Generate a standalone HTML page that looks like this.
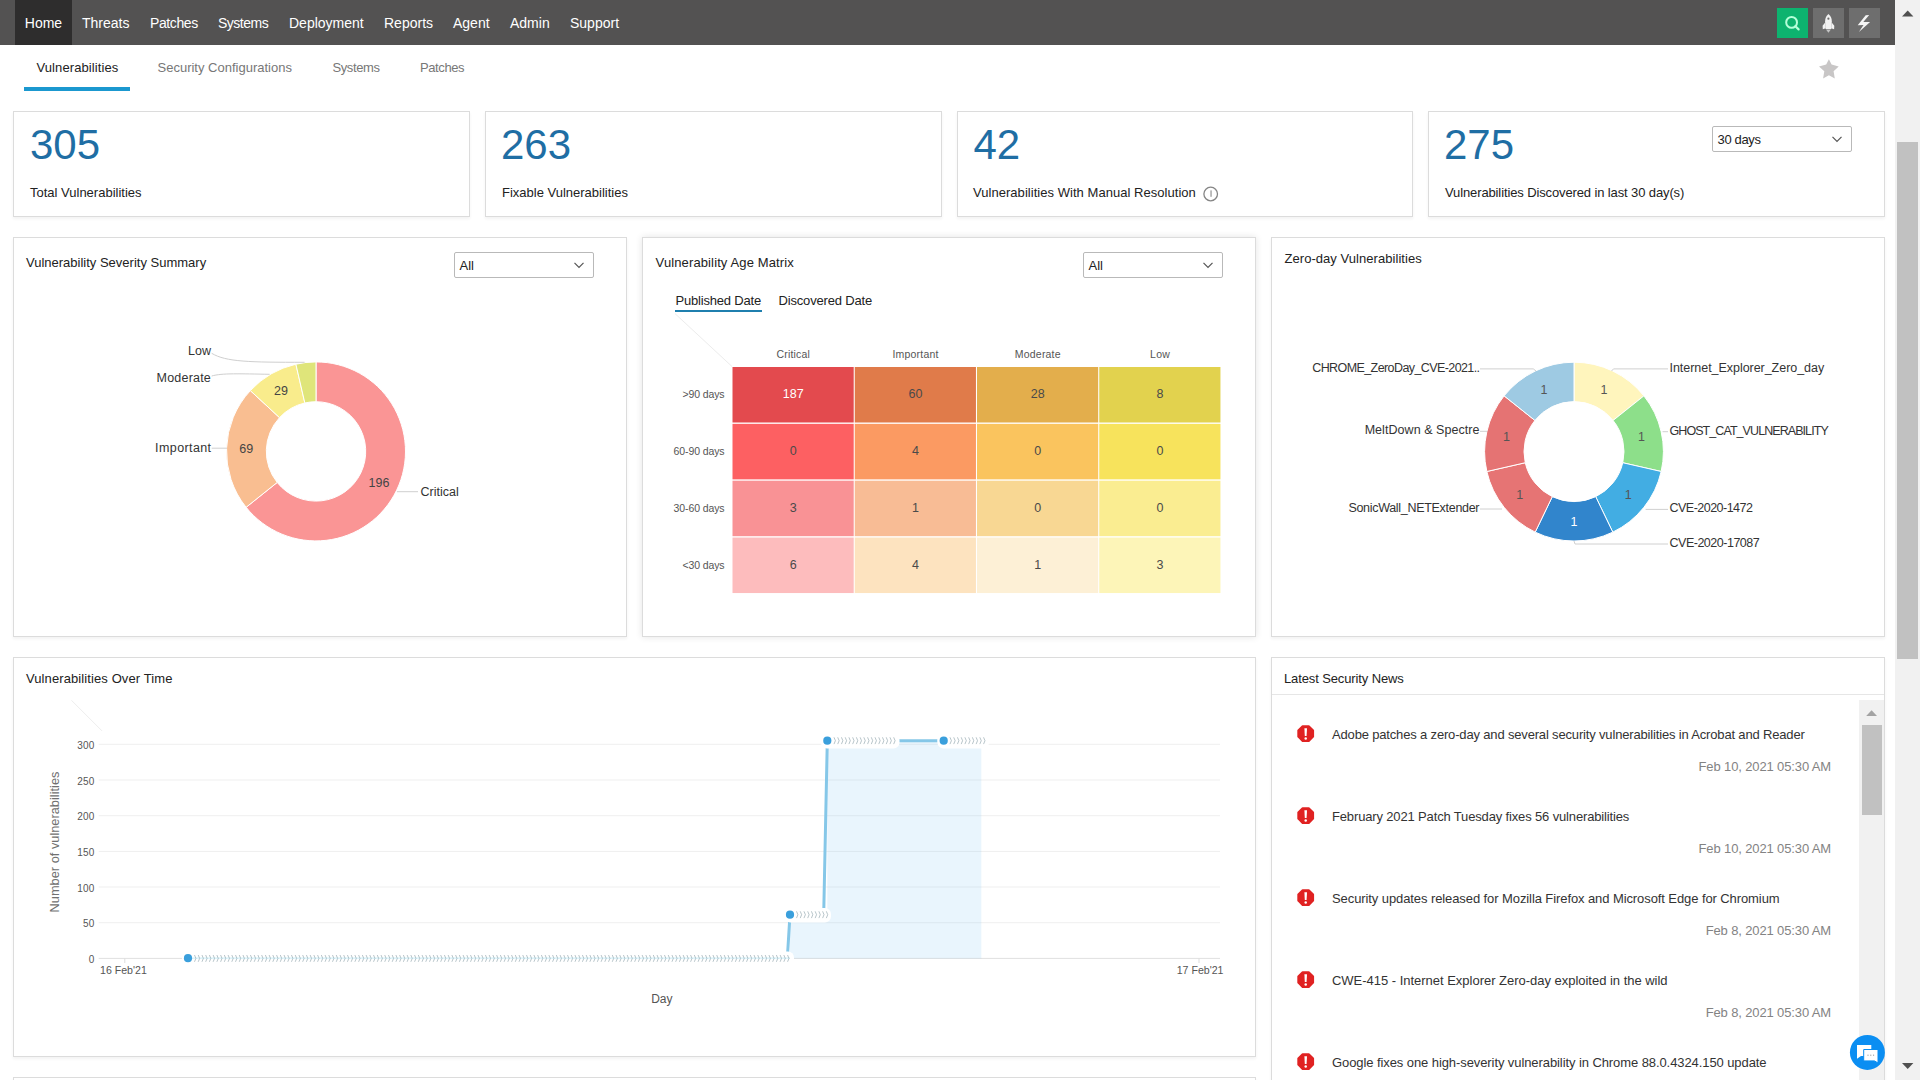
<!DOCTYPE html>
<html><head><meta charset="utf-8">
<style>
*{box-sizing:border-box;margin:0;padding:0}
html,body{width:1920px;height:1080px;overflow:hidden;background:#fff;font-family:"Liberation Sans",sans-serif;color:#222}
.a{position:absolute}
.t{position:absolute;line-height:1;white-space:nowrap}
.nav{left:0;top:0;width:1895px;height:45px;background:#535252}
.nav .t{font-size:14px;color:#fff;top:16.1px}
.sb{left:1895px;top:0;width:25px;height:1080px;background:#f1f1f1}
.card{position:absolute;background:#fff;border:1px solid #dcdcdc;box-shadow:0 2px 3px rgba(0,0,0,.05)}
.sub{font-size:13px;color:#777;top:61px}
.num{font-size:42px;color:#1f6ea4;top:124px}
.lbl{font-size:13px;color:#222;top:186px}
.sel{position:absolute;border:1px solid #b9b9b9;border-radius:2px;background:#fff}
svg{overflow:visible}
</style></head><body>
<div class="a nav">
  <div class="a" style="left:15px;top:0;width:57px;height:45px;background:#2e2d2d"></div>
  <div class="t" style="left:24.8px">Home</div>
  <div class="t" style="left:82px">Threats</div>
  <div class="t" style="left:150px;letter-spacing:-0.4px">Patches</div>
  <div class="t" style="left:218px;letter-spacing:-0.5px">Systems</div>
  <div class="t" style="left:289px">Deployment</div>
  <div class="t" style="left:384px">Reports</div>
  <div class="t" style="left:453px">Agent</div>
  <div class="t" style="left:510px">Admin</div>
  <div class="t" style="left:570px">Support</div>
  <div class="a" style="left:1777px;top:8px;width:31px;height:30px;background:#0db36f"></div>
  <div class="a" style="left:1813px;top:8px;width:31px;height:30px;background:#6e6e6e"></div>
  <div class="a" style="left:1849px;top:8px;width:31px;height:30px;background:#6e6e6e"></div>
  <svg class="a" style="left:1777px;top:8px" width="31" height="30" viewBox="0 0 31 30">
    <circle cx="14.6" cy="14.4" r="5.4" fill="none" stroke="#b5ffd9" stroke-width="2"/>
    <line x1="18.4" y1="18.3" x2="21.6" y2="21.4" stroke="#b5ffd9" stroke-width="2.2" stroke-linecap="round"/>
  </svg>
  <svg class="a" style="left:1813px;top:8px" width="31" height="30" viewBox="0 0 31 30">
    <path d="M15.44 6 C13.4 7.6 12.1 10.3 12.1 13.3 L12.6 21 L18.3 21 L18.8 13.3 C18.8 10.3 17.5 7.6 15.44 6Z" fill="#f2f2f2"/>
    <path d="M12.2 14.6 L9.6 17.8 L9.8 21.3 L12.7 20.3Z M18.7 14.6 L21.3 17.8 L21.1 21.3 L18.2 20.3Z" fill="#f2f2f2"/>
    <path d="M13 21.6 L17.9 21.6 L15.44 24.8Z" fill="#c4c4c4"/>
    <circle cx="15.4" cy="10.7" r="1.1" fill="#6e6e6e"/>
  </svg>
  <svg class="a" style="left:1849px;top:8px" width="31" height="30" viewBox="0 0 31 30">
    <path d="M16.7 7.2 L20.2 6.9 L14.3 14 L21.1 14 L9.9 24 L14.5 17.1 L8.7 17.3Z" fill="#f5f5f5"/>
  </svg>
</div>
<div class="a sb">
  <svg class="a" style="left:0;top:0" width="25" height="1080">
    <path d="M7 16.5 L12.7 10.5 L18.4 16.5Z" fill="#505050"/>
    <rect x="2" y="142" width="21" height="517" fill="#c1c1c1"/>
    <path d="M7 1063 L18.4 1063 L12.7 1069Z" fill="#505050"/>
  </svg>
</div>
<div class="t sub" style="left:36.5px;color:#222;letter-spacing:0.1px">Vulnerabilities</div>
<div class="t sub" style="left:157.5px">Security Configurations</div>
<div class="t sub" style="left:332.5px;letter-spacing:-0.4px">Systems</div>
<div class="t sub" style="left:420px;letter-spacing:-0.4px">Patches</div>
<div class="a" style="left:24px;top:87px;width:106px;height:4px;background:#1b98cf"></div>
<svg class="a" style="left:0;top:0" width="1" height="1">
  <path d="M1828.9 59.3 L1831.6 64.6 L1838.7 66.5 L1833.6 71.2 L1834.8 78.5 L1828.9 75.2 L1823.1 78.5 L1824.3 71.2 L1819 66.5 L1826.2 64.6Z" fill="#c8c6c6"/>
</svg>
<div class="card" style="left:13px;top:111px;width:457px;height:106px"></div>
<div class="card" style="left:485px;top:111px;width:457px;height:106px"></div>
<div class="card" style="left:957px;top:111px;width:456px;height:106px"></div>
<div class="card" style="left:1428px;top:111px;width:457px;height:106px"></div>
<div class="t num" style="left:30px">305</div>
<div class="t lbl" style="left:30px">Total Vulnerabilities</div>
<div class="t num" style="left:501px">263</div>
<div class="t lbl" style="left:502px">Fixable Vulnerabilities</div>
<div class="t num" style="left:973.5px">42</div>
<div class="t lbl" style="left:973px;letter-spacing:0.04px">Vulnerabilities With Manual Resolution</div>
<div class="t num" style="left:1444px">275</div>
<div class="t lbl" style="left:1445px;letter-spacing:-0.12px">Vulnerabilities Discovered in last 30 day(s)</div>
<svg class="a" style="left:0;top:0" width="1" height="1">
  <circle cx="1210.7" cy="194" r="6.8" fill="none" stroke="#858585" stroke-width="1.3"/>
  <rect x="1210.3" y="190.4" width="1.5" height="6.4" fill="#a8a8a8"/>
</svg>
<div class="sel" style="left:1712px;top:126px;width:140px;height:26px"></div>
<div class="t" style="left:1717.50px;top:132.63px;font-size:13px;color:#222;letter-spacing:-0.35px;">30 days</div>
<svg class="a" style="left:0;top:0" width="1" height="1"><path d="M1832.5 136.8 L1837 141.3 L1841.5 136.8" fill="none" stroke="#555" stroke-width="1.2"/></svg>
<div class="card" style="left:13px;top:237px;width:614px;height:400px;"></div>
<div class="t" style="left:26.00px;top:255.93px;font-size:13px;color:#222;">Vulnerability Severity Summary</div>
<div class="sel" style="left:454px;top:252px;width:140px;height:26px"></div>
<div class="t" style="left:459.50px;top:258.63px;font-size:13px;color:#222;">All</div>
<svg class="a" style="left:0;top:0" width="1" height="1"><path d="M574.5 262.8 L579 267.3 L583.5 262.8" fill="none" stroke="#555" stroke-width="1.2"/></svg>
<svg class="a" style="left:0;top:0" width="1" height="1"><path d="M316.00 361.90 A89.5 89.5 0 1 1 246.11 507.31 L277.19 482.44 A49.7 49.7 0 1 0 316.00 401.70Z" fill="#fa9595" stroke="#fff" stroke-width="1"/><path d="M246.11 507.31 A89.5 89.5 0 0 1 250.32 390.61 L279.53 417.64 A49.7 49.7 0 0 0 277.19 482.44Z" fill="#f9be91" stroke="#fff" stroke-width="1"/><path d="M250.32 390.61 A89.5 89.5 0 0 1 295.89 364.19 L304.83 402.97 A49.7 49.7 0 0 0 279.53 417.64Z" fill="#f9ec8c" stroke="#fff" stroke-width="1"/><path d="M295.89 364.19 A89.5 89.5 0 0 1 316.00 361.90 L316.00 401.70 A49.7 49.7 0 0 0 304.83 402.97Z" fill="#dfe57a" stroke="#fff" stroke-width="1"/><path d="M211.7 353.3 C226 362 250 362.3 304.6 362.3" fill="none" stroke="#cfcfcf" stroke-width="1"/><path d="M211.7 376 C222 373 240 373.8 269.6 374.3" fill="none" stroke="#cfcfcf" stroke-width="1"/><path d="M211.7 448.2 L227 448.2" fill="none" stroke="#cfcfcf" stroke-width="1"/><path d="M397 491.7 L418 491.7" fill="none" stroke="#cfcfcf" stroke-width="1"/></svg>
<div class="t" style="right:1709.00px;top:345.18px;font-size:12.5px;color:#333;">Low</div>
<div class="t" style="right:1709.00px;top:372.27px;font-size:12.5px;color:#333;letter-spacing:0.2px;">Moderate</div>
<div class="t" style="right:1708.50px;top:442.27px;font-size:12.5px;color:#333;letter-spacing:0.4px;">Important</div>
<div class="t" style="left:420.50px;top:485.57px;font-size:12.5px;color:#333;">Critical</div>
<div class="t" style="left:-19.00px;width:600px;text-align:center;top:385.18px;font-size:12.5px;color:#444;">29</div>
<div class="t" style="left:-53.70px;width:600px;text-align:center;top:443.27px;font-size:12.5px;color:#444;">69</div>
<div class="t" style="left:79.00px;width:600px;text-align:center;top:476.57px;font-size:12.5px;color:#444;">196</div>
<div class="card" style="left:642px;top:237px;width:614px;height:400px;box-shadow:0 0 7px rgba(0,0,0,.11)"></div>
<div class="t" style="left:655.60px;top:256.03px;font-size:13px;color:#222;letter-spacing:0.12px;">Vulnerability Age Matrix</div>
<div class="sel" style="left:1083px;top:252px;width:140px;height:26px"></div>
<div class="t" style="left:1088.50px;top:258.63px;font-size:13px;color:#222;">All</div>
<svg class="a" style="left:0;top:0" width="1" height="1"><path d="M1203.5 262.8 L1208 267.3 L1212.5 262.8" fill="none" stroke="#555" stroke-width="1.2"/></svg>
<div class="t" style="left:675.60px;top:293.83px;font-size:13px;color:#222;letter-spacing:-0.2px;">Published Date</div>
<div class="t" style="left:778.50px;top:293.83px;font-size:13px;color:#222;letter-spacing:-0.17px;">Discovered Date</div>
<div class="a" style="left:675px;top:309.8px;width:87px;height:2.1px;background:#1f7fae"></div>
<svg class="a" style="left:0;top:0" width="1" height="1"><path d="M675 313.6 L732 366.5" stroke="#ececec" stroke-width="1"/><rect x="732.50" y="367.00" width="121.2" height="55.5" fill="#e34a4e"/><rect x="854.75" y="367.00" width="121.2" height="55.5" fill="#e07b4a"/><rect x="977.00" y="367.00" width="121.2" height="55.5" fill="#e3ae4c"/><rect x="1099.25" y="367.00" width="121.2" height="55.5" fill="#e2d24e"/><rect x="732.50" y="423.85" width="121.2" height="55.5" fill="#fd6062"/><rect x="854.75" y="423.85" width="121.2" height="55.5" fill="#fb9a62"/><rect x="977.00" y="423.85" width="121.2" height="55.5" fill="#fac45e"/><rect x="1099.25" y="423.85" width="121.2" height="55.5" fill="#f7e35c"/><rect x="732.50" y="480.70" width="121.2" height="55.5" fill="#f99295"/><rect x="854.75" y="480.70" width="121.2" height="55.5" fill="#f8bc95"/><rect x="977.00" y="480.70" width="121.2" height="55.5" fill="#f8d793"/><rect x="1099.25" y="480.70" width="121.2" height="55.5" fill="#faed91"/><rect x="732.50" y="537.55" width="121.2" height="55.5" fill="#fdbcbd"/><rect x="854.75" y="537.55" width="121.2" height="55.5" fill="#fde3bf"/><rect x="977.00" y="537.55" width="121.2" height="55.5" fill="#fdf0d6"/><rect x="1099.25" y="537.55" width="121.2" height="55.5" fill="#fdf5b8"/></svg>
<div class="t" style="left:493.30px;width:600px;text-align:center;top:349.36px;font-size:10.5px;color:#555;letter-spacing:0.2px;">Critical</div>
<div class="t" style="left:615.55px;width:600px;text-align:center;top:349.36px;font-size:10.5px;color:#555;letter-spacing:0.2px;">Important</div>
<div class="t" style="left:737.80px;width:600px;text-align:center;top:349.36px;font-size:10.5px;color:#555;letter-spacing:0.2px;">Moderate</div>
<div class="t" style="left:860.05px;width:600px;text-align:center;top:349.36px;font-size:10.5px;color:#555;letter-spacing:0.2px;">Low</div>
<div class="t" style="right:1195.50px;top:389.36px;font-size:10.5px;color:#555;letter-spacing:-0.1px;">&gt;90 days</div>
<div class="t" style="right:1195.50px;top:446.21px;font-size:10.5px;color:#555;letter-spacing:-0.1px;">60-90 days</div>
<div class="t" style="right:1195.50px;top:503.06px;font-size:10.5px;color:#555;letter-spacing:-0.1px;">30-60 days</div>
<div class="t" style="right:1195.50px;top:559.90px;font-size:10.5px;color:#555;letter-spacing:-0.1px;">&lt;30 days</div>
<div class="t" style="left:493.30px;width:600px;text-align:center;top:388.07px;font-size:12.5px;color:#fff;">187</div>
<div class="t" style="left:615.55px;width:600px;text-align:center;top:388.07px;font-size:12.5px;color:#4a4a4a;">60</div>
<div class="t" style="left:737.80px;width:600px;text-align:center;top:388.07px;font-size:12.5px;color:#4a4a4a;">28</div>
<div class="t" style="left:860.05px;width:600px;text-align:center;top:388.07px;font-size:12.5px;color:#4a4a4a;">8</div>
<div class="t" style="left:493.30px;width:600px;text-align:center;top:444.93px;font-size:12.5px;color:#4a4a4a;">0</div>
<div class="t" style="left:615.55px;width:600px;text-align:center;top:444.93px;font-size:12.5px;color:#4a4a4a;">4</div>
<div class="t" style="left:737.80px;width:600px;text-align:center;top:444.93px;font-size:12.5px;color:#4a4a4a;">0</div>
<div class="t" style="left:860.05px;width:600px;text-align:center;top:444.93px;font-size:12.5px;color:#4a4a4a;">0</div>
<div class="t" style="left:493.30px;width:600px;text-align:center;top:501.77px;font-size:12.5px;color:#4a4a4a;">3</div>
<div class="t" style="left:615.55px;width:600px;text-align:center;top:501.77px;font-size:12.5px;color:#4a4a4a;">1</div>
<div class="t" style="left:737.80px;width:600px;text-align:center;top:501.77px;font-size:12.5px;color:#4a4a4a;">0</div>
<div class="t" style="left:860.05px;width:600px;text-align:center;top:501.77px;font-size:12.5px;color:#4a4a4a;">0</div>
<div class="t" style="left:493.30px;width:600px;text-align:center;top:558.62px;font-size:12.5px;color:#4a4a4a;">6</div>
<div class="t" style="left:615.55px;width:600px;text-align:center;top:558.62px;font-size:12.5px;color:#4a4a4a;">4</div>
<div class="t" style="left:737.80px;width:600px;text-align:center;top:558.62px;font-size:12.5px;color:#4a4a4a;">1</div>
<div class="t" style="left:860.05px;width:600px;text-align:center;top:558.62px;font-size:12.5px;color:#4a4a4a;">3</div>
<div class="card" style="left:1271px;top:237px;width:614px;height:400px;"></div>
<div class="t" style="left:1284.50px;top:252.03px;font-size:13px;color:#222;letter-spacing:0.05px;">Zero-day Vulnerabilities</div>
<svg class="a" style="left:0;top:0" width="1" height="1"><path d="M1574.00 362.20 A89.4 89.4 0 0 1 1643.90 395.86 L1613.09 420.43 A50 50 0 0 0 1574.00 401.60Z" fill="#fff5bd" stroke="#fff" stroke-width="1"/><path d="M1643.90 395.86 A89.4 89.4 0 0 1 1661.16 471.49 L1622.75 462.73 A50 50 0 0 0 1613.09 420.43Z" fill="#8ddf8a" stroke="#fff" stroke-width="1"/><path d="M1661.16 471.49 A89.4 89.4 0 0 1 1612.79 532.15 L1595.69 496.65 A50 50 0 0 0 1622.75 462.73Z" fill="#42ade3" stroke="#fff" stroke-width="1"/><path d="M1612.79 532.15 A89.4 89.4 0 0 1 1535.21 532.15 L1552.31 496.65 A50 50 0 0 0 1595.69 496.65Z" fill="#3185cc" stroke="#fff" stroke-width="1"/><path d="M1535.21 532.15 A89.4 89.4 0 0 1 1486.84 471.49 L1525.25 462.73 A50 50 0 0 0 1552.31 496.65Z" fill="#e67474" stroke="#fff" stroke-width="1"/><path d="M1486.84 471.49 A89.4 89.4 0 0 1 1504.10 395.86 L1534.91 420.43 A50 50 0 0 0 1525.25 462.73Z" fill="#e57373" stroke="#fff" stroke-width="1"/><path d="M1504.10 395.86 A89.4 89.4 0 0 1 1574.00 362.20 L1574.00 401.60 A50 50 0 0 0 1534.91 420.43Z" fill="#9ecae3" stroke="#fff" stroke-width="1"/><path d="M1480 368.9 L1533.3 368.9 L1536 371" stroke="#d0d0d0" stroke-width="1" fill="none"/><path d="M1480 431.3 L1487 431.3" stroke="#d0d0d0" stroke-width="1" fill="none"/><path d="M1480 509 L1502 509" stroke="#d0d0d0" stroke-width="1" fill="none"/><path d="M1668 368.9 L1613.5 368.9 L1611.5 371" stroke="#d0d0d0" stroke-width="1" fill="none"/><path d="M1668 431.7 L1662.5 431.7" stroke="#d0d0d0" stroke-width="1" fill="none"/><path d="M1668 509.4 L1645.6 509.4" stroke="#d0d0d0" stroke-width="1" fill="none"/><path d="M1668 544 L1575 544 L1574 541" stroke="#d0d0d0" stroke-width="1" fill="none"/></svg>
<div class="t" style="right:440.50px;top:361.77px;font-size:12.5px;color:#333;letter-spacing:-0.59px;">CHROME_ZeroDay_CVE-2021..</div>
<div class="t" style="right:440.50px;top:424.38px;font-size:12.5px;color:#333;letter-spacing:0.05px;">MeltDown &amp; Spectre</div>
<div class="t" style="right:440.80px;top:502.18px;font-size:12.5px;color:#333;letter-spacing:-0.3px;">SonicWall_NETExtender</div>
<div class="t" style="left:1669.50px;top:362.07px;font-size:12.5px;color:#333;letter-spacing:-0.04px;">Internet_Explorer_Zero_day</div>
<div class="t" style="left:1669.50px;top:424.77px;font-size:12.5px;color:#333;letter-spacing:-0.93px;">GHOST_CAT_VULNERABILITY</div>
<div class="t" style="left:1669.50px;top:502.38px;font-size:12.5px;color:#333;letter-spacing:-0.52px;">CVE-2020-1472</div>
<div class="t" style="left:1669.50px;top:537.38px;font-size:12.5px;color:#333;letter-spacing:-0.49px;">CVE-2020-17087</div>
<div class="t" style="left:1304.07px;width:600px;text-align:center;top:383.84px;font-size:12.5px;color:#555;">1</div>
<div class="t" style="left:1341.56px;width:600px;text-align:center;top:430.85px;font-size:12.5px;color:#555;">1</div>
<div class="t" style="left:1328.18px;width:600px;text-align:center;top:489.48px;font-size:12.5px;color:#555;">1</div>
<div class="t" style="left:1274.00px;width:600px;text-align:center;top:515.57px;font-size:12.5px;color:#fff;">1</div>
<div class="t" style="left:1219.82px;width:600px;text-align:center;top:489.48px;font-size:12.5px;color:#555;">1</div>
<div class="t" style="left:1206.44px;width:600px;text-align:center;top:430.85px;font-size:12.5px;color:#555;">1</div>
<div class="t" style="left:1243.93px;width:600px;text-align:center;top:383.84px;font-size:12.5px;color:#555;">1</div>
<div class="card" style="left:13px;top:657px;width:1243px;height:400px;"></div>
<div class="t" style="left:26.00px;top:671.83px;font-size:13px;color:#222;letter-spacing:0.1px;">Vulnerabilities Over Time</div>
<svg class="a" style="left:0;top:0" width="1" height="1"><line x1="98.7" y1="922.7" x2="1220" y2="922.7" stroke="#efefef" stroke-width="1"/><line x1="98.7" y1="887.0" x2="1220" y2="887.0" stroke="#efefef" stroke-width="1"/><line x1="98.7" y1="851.4" x2="1220" y2="851.4" stroke="#efefef" stroke-width="1"/><line x1="98.7" y1="815.7" x2="1220" y2="815.7" stroke="#efefef" stroke-width="1"/><line x1="98.7" y1="780.0" x2="1220" y2="780.0" stroke="#efefef" stroke-width="1"/><line x1="98.7" y1="744.3" x2="1220" y2="744.3" stroke="#efefef" stroke-width="1"/><line x1="98.7" y1="958.4" x2="1220" y2="958.4" stroke="#e0e0e0" stroke-width="1"/><path d="M71.5 700.4 L102 730.9" stroke="#eeeeee" stroke-width="1"/><line x1="124.8" y1="958.4" x2="124.8" y2="963" stroke="#ddd" stroke-width="1"/><line x1="1199" y1="958.4" x2="1199" y2="963" stroke="#ddd" stroke-width="1"/><path d="M790 958.4 L790 914.7 L827.3 914.7 L827.3 740.7 L981.3 740.7 L981.3 958.4Z" fill="rgba(120,195,240,0.16)"/><path d="M787.4 957 L790 914.7 M823.7 914.7 L827.3 740.7 M898 740.7 L937.5 740.7" stroke="#85c7e8" stroke-width="3" fill="none"/><rect x="182" y="951.4" width="612" height="14.4" rx="6" fill="#fff"/><rect x="784.5" y="908" width="46.5" height="14.4" rx="6" fill="#fff"/><rect x="821" y="734" width="78.5" height="14.4" rx="6" fill="#fff"/><rect x="937.5" y="734" width="51.5" height="14.4" rx="6" fill="#fff"/><line x1="188" y1="958.2" x2="790" y2="958.2" stroke="#d3f1fa" stroke-width="1.2"/><path d="M194.50 955.0l1.4 3.4l-1.4 3.4M198.23 955.0l1.4 3.4l-1.4 3.4M201.96 955.0l1.4 3.4l-1.4 3.4M205.69 955.0l1.4 3.4l-1.4 3.4M209.42 955.0l1.4 3.4l-1.4 3.4M213.15 955.0l1.4 3.4l-1.4 3.4M216.88 955.0l1.4 3.4l-1.4 3.4M220.61 955.0l1.4 3.4l-1.4 3.4M224.34 955.0l1.4 3.4l-1.4 3.4M228.07 955.0l1.4 3.4l-1.4 3.4M231.80 955.0l1.4 3.4l-1.4 3.4M235.53 955.0l1.4 3.4l-1.4 3.4M239.26 955.0l1.4 3.4l-1.4 3.4M242.99 955.0l1.4 3.4l-1.4 3.4M246.72 955.0l1.4 3.4l-1.4 3.4M250.45 955.0l1.4 3.4l-1.4 3.4M254.18 955.0l1.4 3.4l-1.4 3.4M257.91 955.0l1.4 3.4l-1.4 3.4M261.64 955.0l1.4 3.4l-1.4 3.4M265.37 955.0l1.4 3.4l-1.4 3.4M269.10 955.0l1.4 3.4l-1.4 3.4M272.83 955.0l1.4 3.4l-1.4 3.4M276.56 955.0l1.4 3.4l-1.4 3.4M280.29 955.0l1.4 3.4l-1.4 3.4M284.02 955.0l1.4 3.4l-1.4 3.4M287.75 955.0l1.4 3.4l-1.4 3.4M291.48 955.0l1.4 3.4l-1.4 3.4M295.21 955.0l1.4 3.4l-1.4 3.4M298.94 955.0l1.4 3.4l-1.4 3.4M302.67 955.0l1.4 3.4l-1.4 3.4M306.40 955.0l1.4 3.4l-1.4 3.4M310.13 955.0l1.4 3.4l-1.4 3.4M313.86 955.0l1.4 3.4l-1.4 3.4M317.59 955.0l1.4 3.4l-1.4 3.4M321.32 955.0l1.4 3.4l-1.4 3.4M325.05 955.0l1.4 3.4l-1.4 3.4M328.78 955.0l1.4 3.4l-1.4 3.4M332.51 955.0l1.4 3.4l-1.4 3.4M336.24 955.0l1.4 3.4l-1.4 3.4M339.97 955.0l1.4 3.4l-1.4 3.4M343.70 955.0l1.4 3.4l-1.4 3.4M347.43 955.0l1.4 3.4l-1.4 3.4M351.16 955.0l1.4 3.4l-1.4 3.4M354.89 955.0l1.4 3.4l-1.4 3.4M358.62 955.0l1.4 3.4l-1.4 3.4M362.35 955.0l1.4 3.4l-1.4 3.4M366.08 955.0l1.4 3.4l-1.4 3.4M369.81 955.0l1.4 3.4l-1.4 3.4M373.54 955.0l1.4 3.4l-1.4 3.4M377.27 955.0l1.4 3.4l-1.4 3.4M381.00 955.0l1.4 3.4l-1.4 3.4M384.73 955.0l1.4 3.4l-1.4 3.4M388.46 955.0l1.4 3.4l-1.4 3.4M392.19 955.0l1.4 3.4l-1.4 3.4M395.92 955.0l1.4 3.4l-1.4 3.4M399.65 955.0l1.4 3.4l-1.4 3.4M403.38 955.0l1.4 3.4l-1.4 3.4M407.11 955.0l1.4 3.4l-1.4 3.4M410.84 955.0l1.4 3.4l-1.4 3.4M414.57 955.0l1.4 3.4l-1.4 3.4M418.30 955.0l1.4 3.4l-1.4 3.4M422.03 955.0l1.4 3.4l-1.4 3.4M425.76 955.0l1.4 3.4l-1.4 3.4M429.49 955.0l1.4 3.4l-1.4 3.4M433.22 955.0l1.4 3.4l-1.4 3.4M436.95 955.0l1.4 3.4l-1.4 3.4M440.68 955.0l1.4 3.4l-1.4 3.4M444.41 955.0l1.4 3.4l-1.4 3.4M448.14 955.0l1.4 3.4l-1.4 3.4M451.87 955.0l1.4 3.4l-1.4 3.4M455.60 955.0l1.4 3.4l-1.4 3.4M459.33 955.0l1.4 3.4l-1.4 3.4M463.06 955.0l1.4 3.4l-1.4 3.4M466.79 955.0l1.4 3.4l-1.4 3.4M470.52 955.0l1.4 3.4l-1.4 3.4M474.25 955.0l1.4 3.4l-1.4 3.4M477.98 955.0l1.4 3.4l-1.4 3.4M481.71 955.0l1.4 3.4l-1.4 3.4M485.44 955.0l1.4 3.4l-1.4 3.4M489.17 955.0l1.4 3.4l-1.4 3.4M492.90 955.0l1.4 3.4l-1.4 3.4M496.63 955.0l1.4 3.4l-1.4 3.4M500.36 955.0l1.4 3.4l-1.4 3.4M504.09 955.0l1.4 3.4l-1.4 3.4M507.82 955.0l1.4 3.4l-1.4 3.4M511.55 955.0l1.4 3.4l-1.4 3.4M515.28 955.0l1.4 3.4l-1.4 3.4M519.01 955.0l1.4 3.4l-1.4 3.4M522.74 955.0l1.4 3.4l-1.4 3.4M526.47 955.0l1.4 3.4l-1.4 3.4M530.20 955.0l1.4 3.4l-1.4 3.4M533.93 955.0l1.4 3.4l-1.4 3.4M537.66 955.0l1.4 3.4l-1.4 3.4M541.39 955.0l1.4 3.4l-1.4 3.4M545.12 955.0l1.4 3.4l-1.4 3.4M548.85 955.0l1.4 3.4l-1.4 3.4M552.58 955.0l1.4 3.4l-1.4 3.4M556.31 955.0l1.4 3.4l-1.4 3.4M560.04 955.0l1.4 3.4l-1.4 3.4M563.77 955.0l1.4 3.4l-1.4 3.4M567.50 955.0l1.4 3.4l-1.4 3.4M571.23 955.0l1.4 3.4l-1.4 3.4M574.96 955.0l1.4 3.4l-1.4 3.4M578.69 955.0l1.4 3.4l-1.4 3.4M582.42 955.0l1.4 3.4l-1.4 3.4M586.15 955.0l1.4 3.4l-1.4 3.4M589.88 955.0l1.4 3.4l-1.4 3.4M593.61 955.0l1.4 3.4l-1.4 3.4M597.34 955.0l1.4 3.4l-1.4 3.4M601.07 955.0l1.4 3.4l-1.4 3.4M604.80 955.0l1.4 3.4l-1.4 3.4M608.53 955.0l1.4 3.4l-1.4 3.4M612.26 955.0l1.4 3.4l-1.4 3.4M615.99 955.0l1.4 3.4l-1.4 3.4M619.72 955.0l1.4 3.4l-1.4 3.4M623.45 955.0l1.4 3.4l-1.4 3.4M627.18 955.0l1.4 3.4l-1.4 3.4M630.91 955.0l1.4 3.4l-1.4 3.4M634.64 955.0l1.4 3.4l-1.4 3.4M638.37 955.0l1.4 3.4l-1.4 3.4M642.10 955.0l1.4 3.4l-1.4 3.4M645.83 955.0l1.4 3.4l-1.4 3.4M649.56 955.0l1.4 3.4l-1.4 3.4M653.29 955.0l1.4 3.4l-1.4 3.4M657.02 955.0l1.4 3.4l-1.4 3.4M660.75 955.0l1.4 3.4l-1.4 3.4M664.48 955.0l1.4 3.4l-1.4 3.4M668.21 955.0l1.4 3.4l-1.4 3.4M671.94 955.0l1.4 3.4l-1.4 3.4M675.67 955.0l1.4 3.4l-1.4 3.4M679.40 955.0l1.4 3.4l-1.4 3.4M683.13 955.0l1.4 3.4l-1.4 3.4M686.86 955.0l1.4 3.4l-1.4 3.4M690.59 955.0l1.4 3.4l-1.4 3.4M694.32 955.0l1.4 3.4l-1.4 3.4M698.05 955.0l1.4 3.4l-1.4 3.4M701.78 955.0l1.4 3.4l-1.4 3.4M705.51 955.0l1.4 3.4l-1.4 3.4M709.24 955.0l1.4 3.4l-1.4 3.4M712.97 955.0l1.4 3.4l-1.4 3.4M716.70 955.0l1.4 3.4l-1.4 3.4M720.43 955.0l1.4 3.4l-1.4 3.4M724.16 955.0l1.4 3.4l-1.4 3.4M727.89 955.0l1.4 3.4l-1.4 3.4M731.62 955.0l1.4 3.4l-1.4 3.4M735.35 955.0l1.4 3.4l-1.4 3.4M739.08 955.0l1.4 3.4l-1.4 3.4M742.81 955.0l1.4 3.4l-1.4 3.4M746.54 955.0l1.4 3.4l-1.4 3.4M750.27 955.0l1.4 3.4l-1.4 3.4M754.00 955.0l1.4 3.4l-1.4 3.4M757.73 955.0l1.4 3.4l-1.4 3.4M761.46 955.0l1.4 3.4l-1.4 3.4M765.19 955.0l1.4 3.4l-1.4 3.4M768.92 955.0l1.4 3.4l-1.4 3.4M772.65 955.0l1.4 3.4l-1.4 3.4M776.38 955.0l1.4 3.4l-1.4 3.4M780.11 955.0l1.4 3.4l-1.4 3.4M783.84 955.0l1.4 3.4l-1.4 3.4M787.57 955.0l1.4 3.4l-1.4 3.4M796.50 911.3l1.4 3.4l-1.4 3.4M800.23 911.3l1.4 3.4l-1.4 3.4M803.96 911.3l1.4 3.4l-1.4 3.4M807.69 911.3l1.4 3.4l-1.4 3.4M811.42 911.3l1.4 3.4l-1.4 3.4M815.15 911.3l1.4 3.4l-1.4 3.4M818.88 911.3l1.4 3.4l-1.4 3.4M822.61 911.3l1.4 3.4l-1.4 3.4M826.34 911.3l1.4 3.4l-1.4 3.4M834.00 737.3l1.4 3.4l-1.4 3.4M837.73 737.3l1.4 3.4l-1.4 3.4M841.46 737.3l1.4 3.4l-1.4 3.4M845.19 737.3l1.4 3.4l-1.4 3.4M848.92 737.3l1.4 3.4l-1.4 3.4M852.65 737.3l1.4 3.4l-1.4 3.4M856.38 737.3l1.4 3.4l-1.4 3.4M860.11 737.3l1.4 3.4l-1.4 3.4M863.84 737.3l1.4 3.4l-1.4 3.4M867.57 737.3l1.4 3.4l-1.4 3.4M871.30 737.3l1.4 3.4l-1.4 3.4M875.03 737.3l1.4 3.4l-1.4 3.4M878.76 737.3l1.4 3.4l-1.4 3.4M882.49 737.3l1.4 3.4l-1.4 3.4M886.22 737.3l1.4 3.4l-1.4 3.4M889.95 737.3l1.4 3.4l-1.4 3.4M893.68 737.3l1.4 3.4l-1.4 3.4M950.00 737.3l1.4 3.4l-1.4 3.4M953.73 737.3l1.4 3.4l-1.4 3.4M957.46 737.3l1.4 3.4l-1.4 3.4M961.19 737.3l1.4 3.4l-1.4 3.4M964.92 737.3l1.4 3.4l-1.4 3.4M968.65 737.3l1.4 3.4l-1.4 3.4M972.38 737.3l1.4 3.4l-1.4 3.4M976.11 737.3l1.4 3.4l-1.4 3.4M979.84 737.3l1.4 3.4l-1.4 3.4M983.57 737.3l1.4 3.4l-1.4 3.4" fill="none" stroke="#8ea3ab" stroke-width="0.85" opacity="0.75"/><circle cx="188" cy="958.2" r="4.1" fill="#3a9fdc"/><circle cx="790" cy="914.7" r="4.1" fill="#3a9fdc"/><circle cx="827.3" cy="740.7" r="4.1" fill="#3a9fdc"/><circle cx="943.7" cy="740.7" r="4.1" fill="#3a9fdc"/></svg>
<div class="t" style="right:1825.70px;top:955.00px;font-size:10px;color:#555;letter-spacing:0.1px;">0</div>
<div class="t" style="right:1825.70px;top:919.33px;font-size:10px;color:#555;letter-spacing:0.1px;">50</div>
<div class="t" style="right:1825.70px;top:883.65px;font-size:10px;color:#555;letter-spacing:0.1px;">100</div>
<div class="t" style="right:1825.70px;top:847.98px;font-size:10px;color:#555;letter-spacing:0.1px;">150</div>
<div class="t" style="right:1825.70px;top:812.30px;font-size:10px;color:#555;letter-spacing:0.1px;">200</div>
<div class="t" style="right:1825.70px;top:776.62px;font-size:10px;color:#555;letter-spacing:0.1px;">250</div>
<div class="t" style="right:1825.70px;top:740.95px;font-size:10px;color:#555;letter-spacing:0.1px;">300</div>
<div class="t" style="left:100.00px;top:964.51px;font-size:10.6px;color:#555;">16 Feb'21</div>
<div class="t" style="right:696.50px;top:964.51px;font-size:10.6px;color:#555;">17 Feb'21</div>
<div class="t" style="left:361.80px;width:600px;text-align:center;top:992.72px;font-size:12px;color:#555;">Day</div>
<div class="t" style="left:-15px;top:836.3px;width:140px;text-align:center;font-size:12.8px;color:#707070;transform:rotate(-90deg)">Number of vulnerabilities</div>
<div class="card" style="left:1271px;top:657px;width:614px;height:440px"></div>
<div class="a" style="left:1272px;top:694px;width:612px;height:1px;background:#e6e6e6"></div>
<div class="t" style="left:1284.00px;top:671.63px;font-size:13px;color:#222;letter-spacing:-0.12px;">Latest Security News</div>
<div class="a" style="left:1859px;top:700px;width:25px;height:380px;background:#f1f1f1"></div>
<div class="a" style="left:1861.5px;top:725px;width:20.3px;height:89.5px;background:#c1c1c1"></div>
<svg class="a" style="left:0;top:0" width="1" height="1"><path d="M1866.2 716 L1871.6 710.3 L1877 716Z" fill="#a3a3a3"/></svg>
<div class="t" style="left:1332.00px;top:727.63px;font-size:13px;color:#333;letter-spacing:-0.165px;">Adobe patches a zero-day and several security vulnerabilities in Acrobat and Reader</div>
<div class="t" style="right:89.00px;top:759.83px;font-size:13px;color:#838383;letter-spacing:-0.13px;">Feb 10, 2021 05:30 AM</div>
<div class="t" style="left:1332.00px;top:809.63px;font-size:13px;color:#333;letter-spacing:-0.15px;">February 2021 Patch Tuesday fixes 56 vulnerabilities</div>
<div class="t" style="right:89.00px;top:841.83px;font-size:13px;color:#838383;letter-spacing:-0.13px;">Feb 10, 2021 05:30 AM</div>
<div class="t" style="left:1332.00px;top:891.63px;font-size:13px;color:#333;letter-spacing:-0.09px;">Security updates released for Mozilla Firefox and Microsoft Edge for Chromium</div>
<div class="t" style="right:89.00px;top:923.83px;font-size:13px;color:#838383;letter-spacing:-0.13px;">Feb 8, 2021 05:30 AM</div>
<div class="t" style="left:1332.00px;top:973.63px;font-size:13px;color:#333;letter-spacing:-0.02px;">CWE-415 - Internet Explorer Zero-day exploited in the wild</div>
<div class="t" style="right:89.00px;top:1005.83px;font-size:13px;color:#838383;letter-spacing:-0.13px;">Feb 8, 2021 05:30 AM</div>
<div class="t" style="left:1332.00px;top:1055.63px;font-size:13px;color:#333;letter-spacing:-0.085px;">Google fixes one high-severity vulnerability in Chrome 88.0.4324.150 update</div>
<svg class="a" style="left:0;top:0" width="1" height="1"><path d="M1313.09 736.66 L1308.76 740.99 L1302.64 740.99 L1298.31 736.66 L1298.31 730.54 L1302.64 726.21 L1308.76 726.21 L1313.09 730.54Z" fill="#e02222" stroke="#e02222" stroke-width="2" stroke-linejoin="round"/><path d="M1304.4 728.20 L1307 728.20 L1306.6 736.00 L1304.8 736.00Z" fill="#fff"/><circle cx="1305.7" cy="738.60" r="1.25" fill="#fff"/><path d="M1313.09 818.66 L1308.76 822.99 L1302.64 822.99 L1298.31 818.66 L1298.31 812.54 L1302.64 808.21 L1308.76 808.21 L1313.09 812.54Z" fill="#e02222" stroke="#e02222" stroke-width="2" stroke-linejoin="round"/><path d="M1304.4 810.20 L1307 810.20 L1306.6 818.00 L1304.8 818.00Z" fill="#fff"/><circle cx="1305.7" cy="820.60" r="1.25" fill="#fff"/><path d="M1313.09 900.66 L1308.76 904.99 L1302.64 904.99 L1298.31 900.66 L1298.31 894.54 L1302.64 890.21 L1308.76 890.21 L1313.09 894.54Z" fill="#e02222" stroke="#e02222" stroke-width="2" stroke-linejoin="round"/><path d="M1304.4 892.20 L1307 892.20 L1306.6 900.00 L1304.8 900.00Z" fill="#fff"/><circle cx="1305.7" cy="902.60" r="1.25" fill="#fff"/><path d="M1313.09 982.66 L1308.76 986.99 L1302.64 986.99 L1298.31 982.66 L1298.31 976.54 L1302.64 972.21 L1308.76 972.21 L1313.09 976.54Z" fill="#e02222" stroke="#e02222" stroke-width="2" stroke-linejoin="round"/><path d="M1304.4 974.20 L1307 974.20 L1306.6 982.00 L1304.8 982.00Z" fill="#fff"/><circle cx="1305.7" cy="984.60" r="1.25" fill="#fff"/><path d="M1313.09 1064.66 L1308.76 1068.99 L1302.64 1068.99 L1298.31 1064.66 L1298.31 1058.54 L1302.64 1054.21 L1308.76 1054.21 L1313.09 1058.54Z" fill="#e02222" stroke="#e02222" stroke-width="2" stroke-linejoin="round"/><path d="M1304.4 1056.20 L1307 1056.20 L1306.6 1064.00 L1304.8 1064.00Z" fill="#fff"/><circle cx="1305.7" cy="1066.60" r="1.25" fill="#fff"/></svg>
<div class="card" style="left:13px;top:1077px;width:1243px;height:40px"></div>
<svg class="a" style="left:0;top:0" width="1" height="1">
<circle cx="1867.4" cy="1052.4" r="17.5" fill="#0b8ef2"/>
<path d="M1857 1044.9 L1871.3 1044.9 L1871.3 1056 L1861 1056 L1857 1058.8Z" fill="#fff"/>
<path d="M1863.7 1049.5 L1878 1049.5 L1878 1063 L1874.5 1060.9 L1863.7 1060.9Z" fill="#fff" stroke="#0b8ef2" stroke-width="1"/>
<circle cx="1868" cy="1055.2" r="0.6" fill="#999"/><circle cx="1870.8" cy="1055.2" r="0.6" fill="#999"/><circle cx="1873.6" cy="1055.2" r="0.6" fill="#999"/>
</svg>
</body></html>
